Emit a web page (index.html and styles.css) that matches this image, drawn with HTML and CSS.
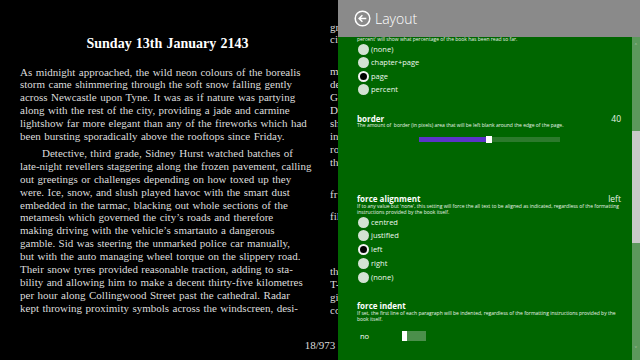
FILE: index.html
```html
<!DOCTYPE html>
<html lang="en">
<head>
  <meta charset="UTF-8" />
  <title>Reader - Layout</title>
  <link rel="stylesheet" href="styles.css">
</head>
<body>
  <!-- Book spread -->
  <div class="reader">
    <div class="spread">
      <div class="page page-left">
        <h1>Sunday 13th January 2143</h1>
        <p class="first">As midnight approached, the wild neon colours of the borealis<br>
storm came shimmering through the soft snow falling gently<br>
across Newcastle upon Tyne. It was as if nature was partying<br>
along with the rest of the city, providing a jade and carmine<br>
lightshow far more elegant than any of the fireworks which had<br>
been bursting sporadically above the rooftops since Friday.</p>
        <p class="indent">Detective, third grade, Sidney Hurst watched batches of<br>
late-night revellers staggering along the frozen pavement, calling<br>
out greetings or challenges depending on how toxed up they<br>
were. Ice, snow, and slush played havoc with the smart dust<br>
embedded in the tarmac, blacking out whole sections of the<br>
metamesh which governed the city’s roads and therefore<br>
making driving with the vehicle’s smartauto a dangerous<br>
gamble. Sid was steering the unmarked police car manually,<br>
but with the auto managing wheel torque on the slippery road.<br>
Their snow tyres provided reasonable traction, adding to sta-<br>
bility and allowing him to make a decent thirty-five kilometres<br>
per hour along Collingwood Street past the cathedral. Radar<br>
kept throwing proximity symbols across the windscreen, desi-</p>
      </div>
      <!-- second page, mostly hidden behind the flyout -->
      <div class="page page-right">
        <p class="p1">gr<br>ci</p>
        <p class="p2">m<br>de<br>Ge<br>Di<br>sh<br>in<br>ro<br>th</p>
        <p class="p3">fr</p>
        <p class="p4">fil</p>
        <p class="p5">th<br>T-<br>gi<br>co</p>
      </div>
    </div>
    <div class="page-num">18/973</div>
  </div>

  <!-- Settings flyout -->
  <aside class="flyout">
    <header class="fly-head">
      <svg class="back" width="17" height="17" viewBox="0 0 17 17">
        <circle cx="8.5" cy="8.5" r="7.3" fill="none" stroke="#fff" stroke-width="1.5"/>
        <path d="M12.3 8.5H5.2M8.4 5.2 5.1 8.5l3.3 3.3" fill="none" stroke="#fff" stroke-width="1.5"/>
      </svg>
      <span class="fly-title">Layout</span>
    </header>

    <div class="fly-body">
      <div class="fly-content">
        <div class="desc">percent' will show what percentage of the book has been read so far.</div>
        <ul class="options">
          <li><span class="radio"></span>(none)</li>
          <li><span class="radio"></span>chapter+page</li>
          <li><span class="radio on"></span>page</li>
          <li><span class="radio"></span>percent</li>
        </ul>

        <div class="setting s-border">
          <div class="head"><span>border</span><span class="val">40</span></div>
          <div class="desc">The amount of&nbsp; border (in pixels) area that will be left blank around the edge of the page.</div>
          <div class="slider">
            <div class="fill"></div>
            <div class="thumb"></div>
            <div class="rest"></div>
          </div>
        </div>

        <div class="setting s-align">
          <div class="head"><span>force alignment</span><span class="val">left</span></div>
          <div class="desc">If to any value but 'none', this setting will force the all text to be aligned as indicated, regardless of the formatting<br>instructions provided by the book itself.</div>
          <ul class="options tall">
            <li><span class="radio"></span>centred</li>
            <li><span class="radio"></span>justified</li>
            <li><span class="radio on"></span>left</li>
            <li><span class="radio"></span>right</li>
            <li><span class="radio"></span>(none)</li>
          </ul>
        </div>

        <div class="setting s-indent">
          <div class="head"><span>force indent</span></div>
          <div class="desc">If set, the first line of each paragraph will be indented, regardless of the formatting instructions provided by the<br>book itself.</div>
          <div class="toggle-row">
            <span class="toggle-label">no</span>
            <span class="toggle"><span class="knob"></span></span>
          </div>
        </div>
      </div>

      <div class="scrollbar">
        <span class="arrow up">&#x2C4;</span>
        <div class="sb-thumb"></div>
        <span class="arrow down">&#x2C5;</span>
      </div>
    </div>
  </aside>
</body>
</html>
```

FILE: styles.css
```css
body { margin: 0; width: 640px; height: 360px; overflow: hidden; background: #000; position: relative; }

/* book */
.reader { height: 360px; display: flex; flex-direction: column; font-family: "Liberation Serif", serif; color: #dcdcdc; }
.spread { display: flex; flex: 1; overflow: hidden; }
.page { font-size: 11px; line-height: 12.9px; word-spacing: 0.7px; white-space: nowrap; }
.page p { margin: 0; }
.page-left { width: 330px; flex: none; }
.page-left h1 { font-size: 14px; line-height: 18px; color: #fff; text-align: center; margin: 35px 0 0 5px; }
.page-left p { padding-left: 20px; }
.page-left .first { margin-top: 12.5px; }
.page-left .indent { margin-top: 4px; text-indent: 22px; }
.page-right { width: 8px; flex: none; padding-top: 20.5px; overflow: hidden; }
.page-right .p2 { margin-top: 19px; }
.page-right .p3 { margin-top: 19px; }
.page-right .p4 { margin-top: 10px; }
.page-right .p5 { margin-top: 42px; }
.page-num { text-align: center; font-size: 11px; height: 22px; line-height: 14px; }

/* flyout */
.flyout { position: absolute; top: 0; right: 0; width: 302px; height: 360px; display: flex; flex-direction: column; font-family: "Open Sans", "Noto Sans", sans-serif; color: #fff; }
.fly-head { height: 37px; flex: none; background: #8a8a8a; display: flex; align-items: center; padding-left: 16px; box-sizing: border-box; }
.back { margin-right: 4px; }
.fly-title { font-size: 14px; font-weight: 300; }
.fly-body { flex: 1; display: flex; background: #006600; overflow: hidden; }
.fly-content { flex: 1; padding: 0 11px 0 19px; margin-top: -1px; }

.desc { font-size: 5px; line-height: 6.5px; color: #eaf5ea; white-space: nowrap; }
.options { list-style: none; margin: 0; padding: 0 0 0 1px; }
.options li { height: 13.5px; line-height: 9px; display: flex; align-items: center; font-size: 7.5px; color: #eef8ee; }
.options.tall li { height: 13.75px; }
.radio { width: 11px; height: 11px; border-radius: 50%; background: #d3e2d3; margin-right: 2px; box-sizing: border-box; }
.radio.on { background: #000; border: 2px solid #f2f2f2; }

.setting .head { display: flex; justify-content: space-between; align-items: center; height: 7px; line-height: 7px; font-size: 8px; font-weight: 700; }
.setting .val { font-weight: 400; font-size: 8.5px; color: #e6f3e6; }
.s-border { margin-top: 18px; }
.s-align { margin-top: 52px; }
.s-align .desc, .s-indent .desc { margin-top: 1px; line-height: 6.4px; }
.s-indent { margin-top: 17.5px; }

.slider { display: flex; align-items: center; width: 141px; height: 7px; margin: 7.5px 0 0 62px; }
.slider .fill { width: 67px; height: 5px; background: #5b34c8; }
.slider .thumb { width: 6px; height: 7px; background: #fff; }
.slider .rest { flex: 1; height: 5px; background: #2c7a2c; }

.toggle-row { display: flex; align-items: center; height: 10px; margin-top: 9px; }
.toggle-label { width: 42px; padding-left: 3px; font-size: 7.5px; line-height: 10px; }
.toggle { width: 24px; height: 10px; background: #4b8f4b; display: flex; }
.toggle .knob { width: 5px; height: 10px; background: #fff; }

.scrollbar { width: 8px; flex: none; background: #5c985c; display: flex; flex-direction: column; align-items: center; }
.arrow { font-size: 8px; line-height: 8px; color: #b5c9b5; height: 8px; }
.arrow.up { margin-top: 6px; }
.sb-thumb { width: 8px; height: 112px; background: #c9c9c9; margin-top: 80px; }
.arrow.down { margin-top: auto; margin-bottom: 6px; }
```
